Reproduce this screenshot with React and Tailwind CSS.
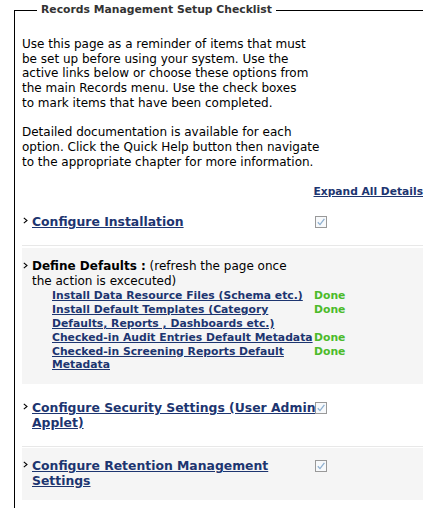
const link = "text-[#1d3570] underline font-bold";

function Arrow() {
  return (
    <span className="w-[10px] shrink-0 pt-[3px] pl-[1px]">
      <svg width="5" height="7" viewBox="0 0 5 7" className="block">
        <path d="M0.8 0.8 L4 3.5 L0.8 6.2" fill="none" stroke="#000" strokeWidth="1.1" />
      </svg>
    </span>
  );
}

function Check() {
  return (
    <span className="flex w-[12px] h-[12px] border border-[#999] bg-[#f7f9fb] items-center justify-center">
      <svg width="10" height="10" viewBox="0 0 10 10">
        <path d="M1.8 5.2 L4 7.6 L8.4 1.8" fill="none" stroke="#8fb0d0" strokeWidth="1.3" />
      </svg>
    </span>
  );
}

function Row({ gray, children, check, className }) {
  return (
    <div className={`flex ${gray ? "bg-[#f5f5f5]" : "bg-white"} ${className}`}>
      <div className="w-[292px] flex">
        <Arrow />
        <div className="flex-1">{children}</div>
      </div>
      {check && (
        <div className="pt-[2px] ml-[1px]">
          <Check />
        </div>
      )}
    </div>
  );
}

function Title({ children }) {
  return (
    <div className="text-[12.4px] leading-[15px] whitespace-nowrap">
      <a className={link}>{children}</a>
    </div>
  );
}

const subItems = [
  ["Install Data Resource Files (Schema etc.)"],
  ["Install Default Templates (Category", "Defaults, Reports , Dashboards etc.)"],
  ["Checked-in Audit Entries Default Metadata"],
  ["Checked-in Screening Reports Default", "Metadata"],
];

export default function App() {
  return (
    <div className="w-[443px] h-[521px] bg-white overflow-hidden font-['DejaVu_Sans',sans-serif] text-black">
      <fieldset className="ml-[14px] mt-[3px] w-[409px] border-l border-t border-black pb-[8px]">
        <legend className="ml-[22px] px-[4px] text-[10.8px] font-bold leading-[14px] text-[#333]">
          Records Management Setup Checklist
        </legend>

        <div className="pl-[7px]">
          {/* intro text */}
          <p className="mt-[20px] text-[12px] leading-[14.7px] whitespace-nowrap">
            Use this page as a reminder of items that must
            <br />
            be set up before using your system. Use the
            <br />
            active links below or choose these options from
            <br />
            the main Records menu. Use the check boxes
            <br />
            to mark items that have been completed.
            <br />
            <br />
            Detailed documentation is available for each
            <br />
            option. Click the Quick Help button then navigate
            <br />
            to the appropriate chapter for more information.
          </p>

          <div className="mt-[16px] flex justify-end text-[10.7px] leading-[14px]">
            <a className={link}>Expand All Details</a>
          </div>

          <Row check className="pt-[15px] pb-[16px] border-b border-[#e8e8e8]">
            <Title>Configure Installation</Title>
          </Row>

          <Row gray className="mt-[2px] pt-[11px] pb-[12px]">
            <div className="text-[12px] leading-[15px] whitespace-nowrap">
              <span className="font-bold">Define Defaults :</span> (refresh the page once
              <br />
              the action is excecuted)
            </div>
            <div className="pl-[20px] grid grid-cols-[262px_auto] text-[10.8px] leading-[13.8px] whitespace-nowrap">
              {subItems.map((lines, i) => (
                <div key={i} className="contents">
                  <a className={link}>
                    {lines.map((l, j) => (
                      <div key={j}>{l}</div>
                    ))}
                  </a>
                  <span className="font-bold text-[#4cbb2a]">Done</span>
                </div>
              ))}
            </div>
          </Row>

          <Row check className="pt-[16px] pb-[16px] border-b border-[#e8e8e8]">
            <Title>
              Configure Security Settings (User Admin
              <br />
              Applet)
            </Title>
          </Row>

          <Row gray check className="mt-[1px] pt-[10px] pb-[12px]">
            <Title>
              Configure Retention Management
              <br />
              Settings
            </Title>
          </Row>
        </div>
      </fieldset>
    </div>
  );
}
